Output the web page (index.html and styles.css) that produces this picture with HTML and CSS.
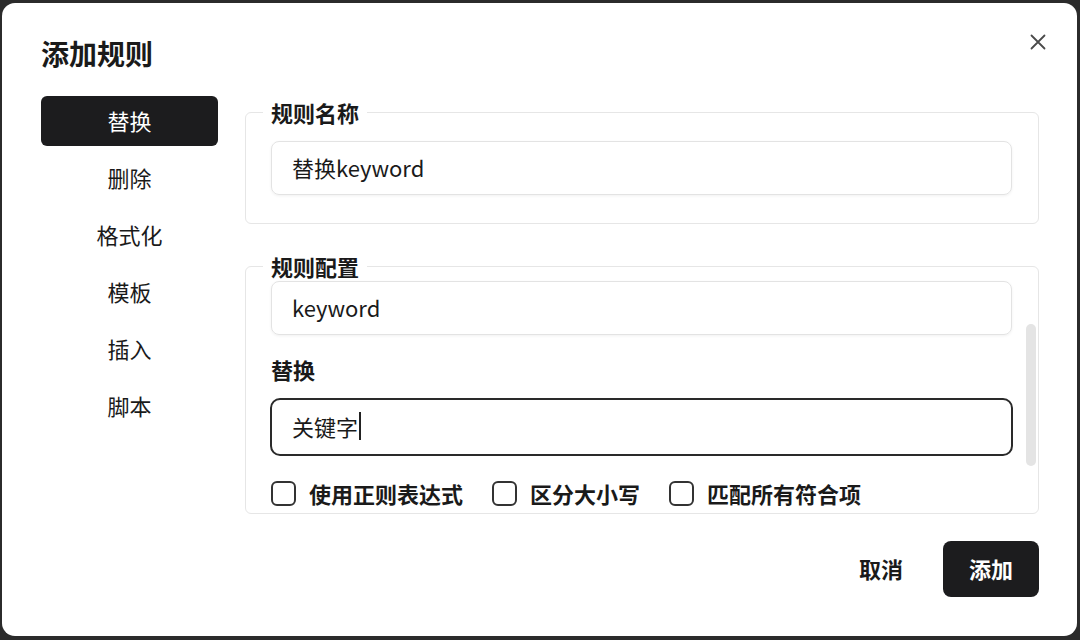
FILE: index.html
```html
<!DOCTYPE html>
<html lang="zh-CN">
<head>
<meta charset="utf-8">
<title>添加规则</title>
<link rel="stylesheet" href="styles.css">
</head>
<body>
<div class="dialog">
  <div class="header">
    <h1 class="title">添加规则</h1>
  </div>
  <button class="close" aria-label="关闭">
    <svg width="16" height="16" viewBox="0 0 16 16"><path d="M1.5 1.5 L14.5 14.5 M14.5 1.5 L1.5 14.5" stroke="#4a4a4a" stroke-width="1.8" stroke-linecap="round" fill="none"/></svg>
  </button>
  <div class="body">
    <nav class="sidebar">
      <div class="nav-item active">替换</div>
      <div class="nav-item">删除</div>
      <div class="nav-item">格式化</div>
      <div class="nav-item">模板</div>
      <div class="nav-item">插入</div>
      <div class="nav-item">脚本</div>
    </nav>
    <div class="main">
      <fieldset class="group">
        <legend class="legend">规则名称</legend>
        <div class="group-inner">
          <div class="field">替换keyword</div>
        </div>
      </fieldset>
      <fieldset class="group group-config">
        <legend class="legend">规则配置</legend>
        <div class="scroll-wrap">
          <div class="scroll" id="scroll">
            <div class="field">keyword</div>
            <div class="label mt20">替换</div>
            <div class="field focused mt15">关键字<span class="caret"></span></div>
            <div class="checks">
              <label class="check"><span class="box"></span>使用正则表达式</label>
              <label class="check"><span class="box"></span>区分大小写</label>
              <label class="check"><span class="box"></span>匹配所有符合项</label>
            </div>
          </div>
          <div class="thumb"></div>
        </div>
      </fieldset>
    </div>
  </div>
  <div class="footer">
    <button class="btn btn-ghost">取消</button>
    <button class="btn btn-primary">添加</button>
  </div>
</div>
<script src="script.js"></script>
</body>
</html>
```
FILE: styles.css
```css
* { box-sizing: border-box; }
html, body { margin: 0; padding: 0; }
body {
  width: 1080px;
  height: 640px;
  background: #2b2b2b;
  font-family: "Noto Sans CJK SC", "Noto Sans", sans-serif;
  color: #1a1a1a;
  overflow: hidden;
}
.dialog {
  position: relative;
  margin: 3px 3px 4px 2px;
  width: 1075px;
  height: 633px;
  background: #fff;
  border-radius: 13px;
  padding: 32px 38px 39px 39px;
  display: flex;
  flex-direction: column;
}
.header { height: 36px; display: flex; align-items: center; }
.title {
  margin: 0;
  font-size: 28px;
  line-height: 36px;
  font-weight: 700;
  color: #1a1a1a;
}
.close {
  position: absolute;
  top: 31px;
  right: 31px;
  width: 16px;
  height: 16px;
  padding: 0;
  border: 0;
  background: none;
  display: flex;
}
.body {
  margin-top: 25px;
  display: flex;
  gap: 27px;
  flex: 1;
  min-height: 0;
}
.sidebar {
  width: 177px;
  display: flex;
  flex-direction: column;
  gap: 7px;
}
.nav-item {
  height: 50px;
  padding-bottom: 3px;
  display: flex;
  align-items: center;
  justify-content: center;
  font-size: 22px;
  color: #1a1a1a;
  border-radius: 6px;
}
.nav-item.active { background: #1c1c1e; color: #fff; }
.main {
  flex: 1;
  padding-top: 2px;
  display: flex;
  flex-direction: column;
}
.group {
  margin: 0;
  padding: 0;
  border: 1px solid #e6e6e6;
  border-radius: 6px;
  min-width: 0;
}
.legend {
  margin-left: 17px;
  padding: 0 8px;
  font-size: 22px;
  line-height: 28px;
  font-weight: 700;
  color: #1a1a1a;
}
.group-inner { padding: 15px 26px 28px 25px; }
.group-config { margin-top: 28px; }
.scroll-wrap { position: relative; }
.scroll {
  height: 233px;
  overflow: hidden;
  padding: 73px 26px 83px 25px;
}
.thumb {
  position: absolute;
  right: 2px;
  top: 44px;
  width: 10px;
  height: 142px;
  border-radius: 5px;
  background: #e4e4e4;
}
.label {
  font-size: 22px;
  line-height: 28px;
  font-weight: 700;
  color: #1a1a1a;
}
.field {
  height: 54px;
  border: 1px solid #e3e3e3;
  border-radius: 8px;
  padding: 0 20px 2px;
  display: flex;
  align-items: center;
  font-size: 22px;
  color: #1a1a1a;
  box-shadow: 0 1px 3px rgba(0,0,0,0.06);
}
.field.focused {
  height: 58px;
  border: 2px solid #2a2a2a;
  border-radius: 10px;
  margin-left: -1px;
  margin-right: -1px;
  box-shadow: none;
}
.caret {
  display: inline-block;
  width: 1.5px;
  height: 28px;
  background: #222;
  margin-left: 1px;
}
.mt15 { margin-top: 15px; }
.mt20 { margin-top: 20px; }
.checks {
  margin-top: 23px;
  height: 28px;
  display: flex;
  align-items: center;
  gap: 29px;
}
.check {
  display: flex;
  align-items: center;
  gap: 13px;
  font-size: 22px;
  font-weight: 700;
  color: #1a1a1a;
}
.box {
  width: 25px;
  height: 25px;
  border: 2px solid #333;
  border-radius: 6px;
  background: #fff;
}
.footer {
  margin-top: 27px;
  display: flex;
  justify-content: flex-end;
  gap: 14px;
}
.btn {
  height: 56px;
  padding: 0 26px 3px;
  border: 0;
  border-radius: 8px;
  font-family: inherit;
  font-size: 22px;
  font-weight: 700;
}
.btn-ghost { background: transparent; color: #1a1a1a; }
.btn-primary { background: #1c1c1e; color: #fff; }
```
FILE: script.js
```js
document.getElementById('scroll').scrollTop = 72;
```
